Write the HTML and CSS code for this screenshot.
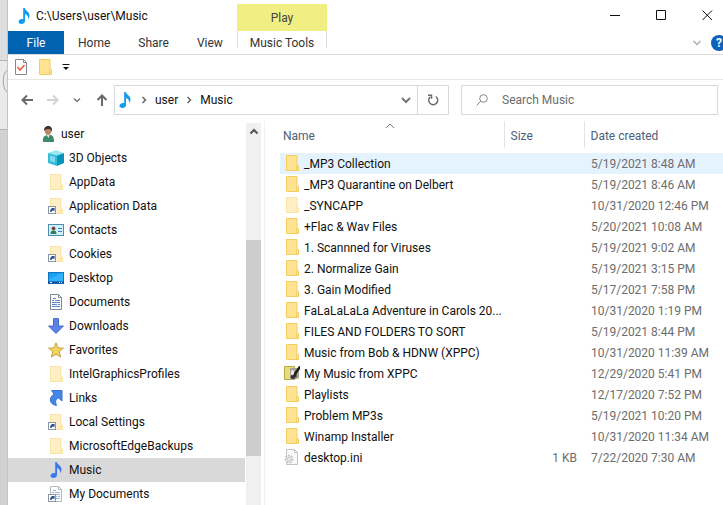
FILE: index.html
```html
<!DOCTYPE html>
<html lang="en">
<head>
  <meta charset="UTF-8">
  <meta name="viewport" content="width=device-width, initial-scale=1.0">
  <title>C:\Users\user\Music</title>
  <link rel="stylesheet" href="styles.css">
</head>
<body>

<!-- Icon set, referenced with <use> below -->
<svg class="sprite" aria-hidden="true">
  <symbol id="i-folder" viewBox="0 0 16 16">
    <path d="M2 0h11v10h1.500v5.500H2z" fill="#ffe391"/>
    <path d="M2.500 .5h10.500v10M2.500 .5v15h12M14.500 15.500v-5M12.500 15v-3.500l1-1.500" fill="none" stroke="#f3cd62"/>
  </symbol>
  <symbol id="i-note" viewBox="0 0 16 16">
    <path d="M7.200 0h1.600c.3 2.600 4.700 3.600 4.700 7.400 0 1.500-.6 2.600-1.500 3.600.6-3-.9-4.300-3-5v7c0 1.900-1.700 3-3.600 3-1.700 0-2.900-.9-2.900-2.200 0-1.600 1.700-2.800 3.500-2.800.5 0 .9.100 1.200.200z" fill="currentColor"/>
  </symbol>
  <symbol id="i-shortcut" viewBox="0 0 16 16">
    <rect x=".5" y="8.500" width="7" height="7" fill="#fff" stroke="#8a96a8"/>
    <path d="M2 14c0-2 .6-2.800 2-3l-1-1h3.500v3.500l-1-1c-1.200 0-1.800.5-2 1.500z" fill="#274b8c"/>
  </symbol>
  <symbol id="i-doc" viewBox="0 0 16 16">
    <path d="M2.500.5h8l3 3v12h-11z" fill="#fff" stroke="#7b8d92"/>
    <path d="M10.500.5v3h3" fill="none" stroke="#7b8d92"/>
    <path d="M4 6.500h2M4 8.500h8M4 10.500h5M4 12.500h8M7 6.500h5M5 4.500h3M10 10.500h2" stroke="#5f84c4"/>
  </symbol>
</svg>

<div class="desktop">
  <div class="behind">
    <svg viewBox="0 0 7 505"><path d="M0 60.500h7M0 129.500h7" stroke="#b2b2b2"/><path d="M7 70.500C2 73 2 89 7 92" fill="none" stroke="#a0a4a8"/></svg>
  </div>

  <div class="window">
    <header class="ribbon">
      <div class="title">
        <svg class="icon title-note"><use href="#i-note"/></svg>
        <h1>C:\Users\user\Music</h1>
      </div>
      <div class="context-title">Play</div>
      <div class="controls">
        <button aria-label="Minimize"><svg viewBox="0 0 11 11"><path d="M0 5.500h10"/></svg></button>
        <button aria-label="Maximize"><svg viewBox="0 0 11 11"><path d="M.5 .5h9v9h-9z"/></svg></button>
        <button aria-label="Close"><svg viewBox="0 0 11 11"><path d="M.5 .5l9.500 9.500M10 .5L.5 10"/></svg></button>
      </div>

      <nav class="tabs">
        <button class="tab tab-file">File</button>
        <button class="tab">Home</button>
        <button class="tab">Share</button>
        <button class="tab">View</button>
      </nav>
      <button class="tab-context">Music Tools</button>
      <div class="ribbon-end">
        <button aria-label="Expand the ribbon"><svg class="chev" viewBox="0 0 10 10"><path d="M1.500 3l3.500 3.500L8.500 3" fill="none" stroke="#b0b0b0" stroke-width="1.500"/></svg></button>
        <button class="help" aria-label="Help">?</button>
      </div>
    </header>

    <div class="quick">
      <button aria-label="Properties">
        <svg class="icon" viewBox="0 0 16 16"><path d="M2.500.5h8l3 3v12h-11z" fill="#fff" stroke="#888"/><path d="M10.500.5v3h3" fill="none" stroke="#888"/><path d="M4.500 8l2.500 3 4.500-5" fill="none" stroke="#ee5a36" stroke-width="1.600"/></svg>
      </button>
      <button aria-label="New folder"><svg class="icon"><use href="#i-folder"/></svg></button>
      <button aria-label="Customize Quick Access Toolbar">
        <svg class="chev" viewBox="0 0 10 10"><path d="M1.500 2.500h7" stroke="#111"/><path d="M2 5h6L5 8z" fill="#111"/></svg>
      </button>
    </div>

    <div class="location">
      <div class="history">
        <button aria-label="Back"><svg class="arrow" viewBox="0 0 12 12"><path d="M12 6H1.500M6 1.500L1.500 6 6 10.500" stroke="#6a6a6a"/></svg></button>
        <button aria-label="Forward"><svg class="arrow" viewBox="0 0 12 12"><path d="M0 6h10.500M6 1.500L10.500 6 6 10.500" stroke="#d2d2d2"/></svg></button>
        <button aria-label="Recent locations"><svg class="chev" viewBox="0 0 10 10"><path d="M2 3.500l3 3 3-3" fill="none" stroke="#777" stroke-width="1.500"/></svg></button>
        <button aria-label="Up"><svg class="arrow" viewBox="0 0 12 12"><path d="M6 12V1.500M1.500 6L6 1.500 10.500 6" stroke="#6a6a6a"/></svg></button>
      </div>
      <div class="address">
        <svg class="icon title-note"><use href="#i-note"/></svg>
        <svg class="chev" viewBox="0 0 10 10"><path d="M3.500 2l3 3-3 3" fill="none" stroke="#666" stroke-width="1.500"/></svg>
        <a href="#">user</a>
        <svg class="chev" viewBox="0 0 10 10"><path d="M3.500 2l3 3-3 3" fill="none" stroke="#666" stroke-width="1.500"/></svg>
        <a href="#">Music</a>
        <button class="previous" aria-label="Previous locations"><svg class="chev" viewBox="0 0 10 10"><path d="M1 3l4 4 4-4" fill="none" stroke="#777" stroke-width="2"/></svg></button>
        <button class="refresh" aria-label="Refresh"><svg class="arrow" viewBox="0 0 12 12"><path d="M8.800 2.500A4.500 4.500 0 1 1 3 3M1 1.200h3.500v3.600" stroke="#6a6a6a" stroke-width="1.500"/></svg></button>
      </div>
      <label class="search">
        <svg class="arrow" viewBox="0 0 12 12"><circle cx="7.500" cy="4.500" r="3.800" class="lens"/><path d="M4.800 7.200L.5 11.500" class="lens"/></svg>
        <input type="search" placeholder="Search Music" aria-label="Search Music">
      </label>
    </div>

    <div class="panes">
      <nav class="tree">
        <ul>
          <li><a class="parent" href="#">
            <svg class="icon" viewBox="0 0 16 16"><path d="M3 16c-.5-4 .5-6 4-7l4 0c2.500 1 3 3 3 7z" fill="#3f8a68"/><path d="M6 8l2.500 4L10 8z" fill="#e8eef0"/><path d="M4.500 4c0-6 7.500-5 7 0 0 3-1.500 5-3.300 5S4.500 7 4.500 4z" fill="#b98665"/><path d="M4 5c-.5-6 8-7 8-1l-.5 2c0-2-1-3-2.500-3S5.500 3 4 5z" fill="#3d3029"/></svg>
            user</a></li>
          <li><a href="#">
            <svg class="icon" viewBox="0 0 16 16"><path d="M0 3l8-3 8 3-7 3z" fill="#9be8f2"/><path d="M0 3l9 2.500V16l-9-3z" fill="#35bdd8"/><path d="M9 5.500L16 3v10l-7 3z" fill="#0893bd"/><path d="M2 5.500l5 1.500v5.500L2 11z" fill="#7cdcec"/></svg>
            3D Objects</a></li>
          <li><a href="#"><svg class="icon faded"><use href="#i-folder"/></svg>AppData</a></li>
          <li><a href="#"><svg class="icon"><use class="faded" href="#i-folder"/><use href="#i-shortcut"/></svg>Application Data</a></li>
          <li><a href="#">
            <svg class="icon" viewBox="0 0 16 16"><rect x=".5" y="2.500" width="15" height="11" fill="#d4f0fb" stroke="#4a8db0"/><path d="M2.500 12c0-3 1-3.500 3-3.500s3 .5 3 3.500z" fill="#2f7a62"/><circle cx="5.500" cy="6.500" r="2" fill="#6c5140"/><path d="M10 6.500h4M10 9.500h4" stroke="#3184c8"/></svg>
            Contacts</a></li>
          <li><a href="#"><svg class="icon"><use class="faded" href="#i-folder"/><use href="#i-shortcut"/></svg>Cookies</a></li>
          <li><a href="#">
            <svg class="icon" viewBox="0 0 16 16"><rect x=".5" y="2.500" width="15" height="11" fill="#16a1f5" stroke="#1673bd"/><path d="M1 9L14 3h1v8H1z" fill="#31b3fb"/><path d="M0 12.500h16" stroke="#164f9c" stroke-width="2"/><path d="M2 12.500h2M11 12.500h1M13 12.500h1" stroke="#dff"/></svg>
            Desktop</a></li>
          <li><a href="#"><svg class="icon"><use href="#i-doc"/></svg>Documents</a></li>
          <li><a href="#">
            <svg class="icon" viewBox="0 0 16 16"><path d="M5.500.5h5V8h5L8 15.500.5 8h5z" fill="#5b83e6" stroke="#476fd0"/></svg>
            Downloads</a></li>
          <li><a href="#">
            <svg class="icon" viewBox="0 0 16 16"><path d="M8 .8l2.100 5 5.300.4-4.100 3.500 1.300 5.300L8 12.200 3.400 15l1.300-5.300L.6 6.200l5.300-.4z" fill="#f2d45f" stroke="#c9a343"/></svg>
            Favorites</a></li>
          <li><a href="#"><svg class="icon faded"><use href="#i-folder"/></svg>IntelGraphicsProfiles</a></li>
          <li><a href="#">
            <svg class="icon" viewBox="0 0 16 16"><path d="M3.500 .5H14v10.500l-3.500-3C7.500 9 7 11.500 8.500 15.500 1 14 .5 8 6 4z" fill="#4684e8" stroke="#3872d2"/></svg>
            Links</a></li>
          <li><a href="#"><svg class="icon"><use class="faded" href="#i-folder"/><use href="#i-shortcut"/></svg>Local Settings</a></li>
          <li><a href="#"><svg class="icon faded"><use href="#i-folder"/></svg>MicrosoftEdgeBackups</a></li>
          <li><a class="current" href="#" aria-current="page"><svg class="icon tree-note"><use href="#i-note"/></svg>Music</a></li>
          <li><a href="#"><svg class="icon"><use class="pale" href="#i-doc"/><use href="#i-shortcut"/></svg>My Documents</a></li>
        </ul>
      </nav>
      <div class="scrollbar">
        <svg class="chev" viewBox="0 0 10 10"><path d="M1.500 6.500L5 3l3.500 3.500" fill="none" stroke="#555" stroke-width="2"/></svg>
        <div class="thumb"></div>
      </div>

      <main class="files">
        <svg class="sort" viewBox="0 0 10 10"><path d="M1 7l4-4 4 4" fill="none" stroke="#777"/></svg>
        <table>
          <thead>
            <tr><th class="col-name">Name</th><th class="col-size">Size</th><th>Date created</th></tr>
          </thead>
          <tbody>
            <tr class="hover"><td><svg class="icon"><use href="#i-folder"/></svg>_MP3 Collection</td><td></td><td>5/19/2021 8:48 AM</td></tr>
            <tr><td><svg class="icon"><use href="#i-folder"/></svg>_MP3 Quarantine on Delbert</td><td></td><td>5/19/2021 8:46 AM</td></tr>
            <tr><td><svg class="icon faded"><use href="#i-folder"/></svg>_SYNCAPP</td><td></td><td>10/31/2020 12:46 PM</td></tr>
            <tr><td><svg class="icon"><use href="#i-folder"/></svg>+Flac &amp; Wav Files</td><td></td><td>5/20/2021 10:08 AM</td></tr>
            <tr><td><svg class="icon"><use href="#i-folder"/></svg>1. Scannned for Viruses</td><td></td><td>5/19/2021 9:02 AM</td></tr>
            <tr><td><svg class="icon"><use href="#i-folder"/></svg>2. Normalize Gain</td><td></td><td>5/19/2021 3:15 PM</td></tr>
            <tr><td><svg class="icon"><use href="#i-folder"/></svg>3. Gain Modified</td><td></td><td>5/17/2021 7:58 PM</td></tr>
            <tr><td><svg class="icon"><use href="#i-folder"/></svg>FaLaLaLaLa Adventure in Carols 20...</td><td></td><td>10/31/2020 1:19 PM</td></tr>
            <tr><td><svg class="icon"><use href="#i-folder"/></svg>FILES AND FOLDERS TO SORT</td><td></td><td>5/19/2021 8:44 PM</td></tr>
            <tr><td><svg class="icon"><use href="#i-folder"/></svg>Music from Bob &amp; HDNW (XPPC)</td><td></td><td>10/31/2020 11:39 AM</td></tr>
            <tr><td><svg class="icon" viewBox="0 0 16 16"><path d="M.5 1.500h10v13H.5z" fill="#e6dc7c" stroke="#b7ab45"/><path d="M6 3h9v10l-4 1.500H6z" fill="#aaa596"/><path d="M9 10L15.500 1v3L12 9v3" fill="#222" stroke="#222"/><ellipse cx="9" cy="12" rx="2.500" ry="2" fill="#333"/><ellipse cx="8.500" cy="7.500" rx="1.500" ry="2.500" fill="#eee"/></svg>My Music from XPPC</td><td></td><td>12/29/2020 5:41 PM</td></tr>
            <tr><td><svg class="icon"><use href="#i-folder"/></svg>Playlists</td><td></td><td>12/17/2020 7:52 PM</td></tr>
            <tr><td><svg class="icon"><use href="#i-folder"/></svg>Problem MP3s</td><td></td><td>5/19/2021 10:20 PM</td></tr>
            <tr><td><svg class="icon"><use href="#i-folder"/></svg>Winamp Installer</td><td></td><td>10/31/2020 11:34 AM</td></tr>
            <tr><td><svg class="icon" viewBox="0 0 16 16"><path d="M2.500.5h8l3 3v12h-11z" fill="#fafafa" stroke="#c4c4c4"/><path d="M10.500.5v3h3" fill="none" stroke="#c4c4c4"/><circle cx="5" cy="10" r="3.500" fill="#eee" stroke="#c0c6ca" stroke-width="2" stroke-dasharray="2 1"/><circle cx="5" cy="10" r="1.500" fill="#fff" stroke="#c0c6ca"/></svg>desktop.ini</td><td>1 KB</td><td>7/22/2020 7:30 AM</td></tr>
          </tbody>
        </table>
      </main>
    </div>
  </div>
</div>

</body>
</html>
```

FILE: styles.css
```css
* {
  box-sizing: border-box;
}

body {
  margin: 0;
  font-family: Roboto, "Open Sans", sans-serif;
  font-size: 12px;
  line-height: 16px;
  color: #111;
  background-color: #fff;
}

button {
  display: flex;
  align-items: center;
  justify-content: center;
  margin: 0;
  padding: 0;
  border: none;
  background: none;
  font: inherit;
  color: inherit;
}

a {
  color: inherit;
  text-decoration: none;
}

svg {
  display: block;
  flex: none;
}

.sprite {
  display: none;
}

.icon {
  width: 16px;
  height: 16px;
}

.chev {
  width: 10px;
  height: 10px;
}

.arrow {
  width: 12px;
  height: 12px;
  fill: none;
  stroke-width: 2;
}

.faded {
  opacity: 0.55;
}

.pale {
  opacity: 0.6;
}

.title-note {
  color: #109bf0;
}

.tree-note {
  color: #3e78f0;
}

.desktop {
  display: flex;
  height: 100vh;
  overflow: hidden;
}

/* Sliver of the window underneath */
.behind {
  width: 8px;
  flex: none;
  background: linear-gradient(#dcdee0 60px, #e8eaec 60px, #e8eaec 129px, #d2d2d2 129px);
  border-right: 1px solid #c4c4c4;
}

.behind svg {
  width: 7px;
  height: 505px;
}

.window {
  flex: 1;
  min-width: 0;
  display: flex;
  flex-direction: column;
}

/* Title bar and ribbon tabs */
.ribbon {
  display: grid;
  grid-template-columns: 229px 90px 1fr;
  grid-template-rows: 31px 23px;
  border-bottom: 1px solid #dadada;
}

.title {
  display: flex;
  align-items: center;
  gap: 4px;
  padding-left: 8px;
}

.title h1 {
  margin: 0;
  font-size: 12px;
  font-weight: normal;
}

.context-title {
  margin-top: 4px;
  line-height: 28px;
  text-align: center;
  color: #444;
  background-color: #f1ef83;
}

.controls {
  display: flex;
  align-items: center;
  justify-content: flex-end;
  gap: 35px;
  padding-right: 10px;
}

.controls svg {
  width: 11px;
  height: 11px;
  fill: none;
  stroke: #111;
}

.tabs {
  display: flex;
}

.tab {
  flex: none;
  padding: 0 14px;
  color: #333;
}

.tab-file {
  width: 56px;
  color: #fff;
  background-color: #0063b1;
}

.tab-context {
  height: 17px;
  padding-top: 7px;
  color: #333;
  border-left: 1px solid #ddd;
  border-right: 1px solid #ddd;
}

.ribbon-end {
  display: flex;
  align-items: center;
  justify-content: flex-end;
  gap: 9px;
  margin-right: -4px;
}

.help {
  width: 16px;
  height: 16px;
  border-radius: 50%;
  color: #fff;
  font-weight: bold;
  background-color: #0c62ba;
}

.quick {
  display: flex;
  align-items: center;
  gap: 8px;
  height: 25px;
  padding-left: 5px;
  border-bottom: 1px solid #e6e6e6;
}

/* Navigation buttons, address and search */
.location {
  display: flex;
  height: 41px;
  padding: 5px 5px 6px 13px;
}

.history {
  display: flex;
  justify-content: space-between;
  width: 87px;
  margin-right: 6px;
}

.address {
  flex: 1;
  display: flex;
  align-items: center;
  gap: 6px;
  padding-left: 2px;
  border: 1px solid #d9d9d9;
}

.previous {
  margin-left: auto;
}

.refresh {
  width: 31px;
  height: 28px;
  border-left: 1px solid #d9d9d9;
}

.search {
  display: flex;
  align-items: center;
  gap: 14px;
  width: 257px;
  margin-left: 12px;
  padding-left: 14px;
  border: 1px solid #d9d9d9;
}

.search input {
  flex: 1;
  min-width: 0;
  padding: 0;
  border: none;
  outline: none;
  font: inherit;
  background: none;
}

.search input::placeholder {
  color: #6d6d6d;
}

.lens {
  stroke: #888;
  stroke-width: 1;
}

.panes {
  flex: 1;
  min-height: 0;
  display: flex;
}

/* Folder tree */
.tree {
  width: 238px;
  flex: none;
  overflow: hidden;
}

.tree ul {
  margin: 0;
  padding: 1px 0 0;
  list-style: none;
}

.tree a {
  display: flex;
  align-items: center;
  gap: 5px;
  height: 24px;
  margin-right: 1px;
  padding-left: 40px;
}

.tree .parent {
  padding-left: 32px;
}

.tree .current {
  background-color: #d9d9d9;
}

.scrollbar {
  display: flex;
  flex-direction: column;
  align-items: center;
  width: 15px;
  flex: none;
  margin-top: 2px;
  padding-top: 4px;
  background-color: #f0f0f0;
}

.thumb {
  width: 15px;
  height: 216px;
  margin-top: 103px;
  background-color: #cdcdcd;
}

/* File list */
.files {
  position: relative;
  flex: 1;
  min-width: 0;
  margin-left: 3px;
  padding-left: 15px;
  border-left: 1px solid #f0f0f0;
}

.sort {
  position: absolute;
  top: 0;
  left: 120px;
  width: 10px;
  height: 10px;
}

table {
  width: 100%;
  table-layout: fixed;
  border-collapse: collapse;
}

th {
  height: 27px;
  padding: 2px 6px 0 6px;
  text-align: left;
  font-weight: normal;
  color: #4c607a;
}

th + th {
  border-left: 1px solid #e3e3e3;
}

.col-name {
  width: 224px;
  padding-left: 3px;
}

.col-size {
  width: 80px;
}

tbody::before {
  content: "";
  display: block;
  height: 5px;
}

td {
  height: 21px;
  padding: 0 7px;
  white-space: nowrap;
  color: #6d6d6d;
}

td:first-child {
  padding: 0 0 0 4px;
  color: #111;
}

td:nth-child(2) {
  text-align: right;
}

td .icon {
  display: inline-block;
  margin-right: 4px;
  vertical-align: -3px;
}

.hover {
  background-color: #e5f3ff;
}
```
